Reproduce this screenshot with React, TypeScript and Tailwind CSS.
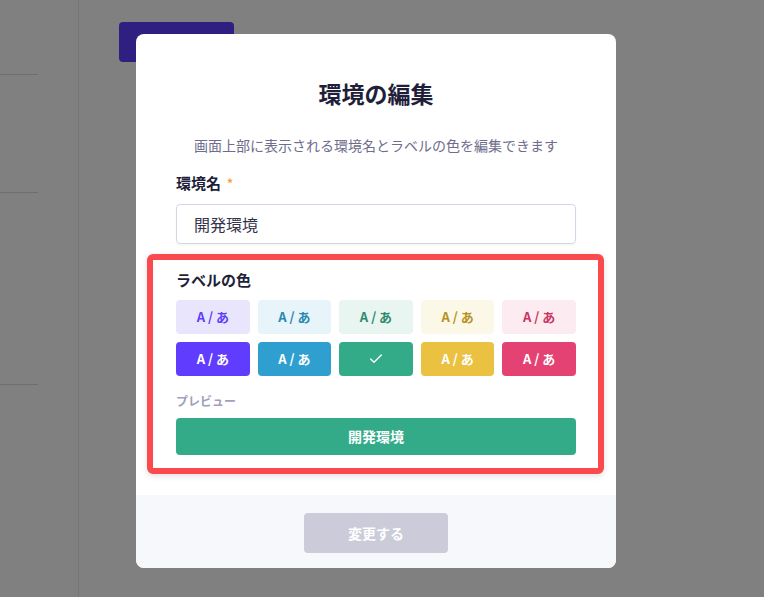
import { Check } from 'lucide-react';

const swatches = [
  { light: 'bg-[#e9e5fd] text-[#5f3dfc]', dark: 'bg-[#603dfe]' },
  { light: 'bg-[#e7f4f9] text-[#2a88b0]', dark: 'bg-[#2f9fd0]' },
  { light: 'bg-[#e8f5f0] text-[#2f8a6c]', dark: 'bg-[#33ab89]', selected: true },
  { light: 'bg-[#fcf8e8] text-[#b59223]', dark: 'bg-[#ebc142]' },
  { light: 'bg-[#fcebf0] text-[#c9355e]', dark: 'bg-[#e44272]' },
];

export default function App() {
  return (
    <div className="relative w-[764px] h-[597px] overflow-hidden bg-[#808080] font-['Noto_Sans_CJK_JP','Noto_Sans',sans-serif]">
      {/* dimmed page behind the dialog */}
      <div className="flex h-full">
        <div className="w-[79px] border-r border-[#767676]">
          <div className="mt-[74px] h-px w-[38px] bg-[#6f6f6f]" />
          <div className="mt-[117px] h-px w-[38px] bg-[#6f6f6f]" />
          <div className="mt-[191px] h-px w-[38px] bg-[#6f6f6f]" />
        </div>
        <div className="pl-[40px] pt-[22px]">
          <div className="w-[115px] h-[40px] rounded-[4px] bg-[#2e1f80]" />
        </div>
      </div>

      {/* dialog */}
      <div className="absolute left-[136px] top-[34px] w-[480px] rounded-[8px] bg-white overflow-hidden">
        <div className="px-10 pt-[43px] pb-[40px]">
          <h2 className="text-center text-[23px] leading-[32px] font-bold text-[#1f1f3a]">環境の編集</h2>
          <p className="mt-[26px] text-center text-[14px] leading-[20px] text-[#6e6d8c]">
            画面上部に表示される環境名とラベルの色を編集できます
          </p>

          <div className="mt-[18px] flex items-center gap-[6px] text-[15px] leading-[20px] font-bold text-[#1f1f3a]">
            環境名
            <span className="text-[12px] text-[#fb9a3c]">*</span>
          </div>
          <div className="mt-[11px] h-[40px] flex items-center rounded-[4px] border border-[#d5d5e3] px-[17px] text-[16px] text-[#33334a] shadow-[0_1px_2px_rgba(0,0,0,0.05)]">
            開発環境
          </div>

          <div className="relative mt-[26px]">
            <div className="absolute -left-[29px] -right-[28px] -top-[16px] -bottom-[19px] rounded-[6px] border-[6px] border-[#fb4a4d] shadow-[0_2px_6px_rgba(0,0,0,0.12)]" />
            <div className="text-[15px] leading-[20px] font-bold text-[#1f1f3a]">ラベルの色</div>
            <div className="mt-[10px] grid grid-cols-5 gap-2">
              {swatches.map((s, i) => (
                <div key={`l${i}`} className={`h-[34px] rounded-[4px] flex items-center justify-center text-[13px] font-bold ${s.light}`}>
                  A / あ
                </div>
              ))}
              {swatches.map((s, i) => (
                <div key={`d${i}`} className={`h-[34px] rounded-[4px] flex items-center justify-center text-[13px] font-bold text-white ${s.dark}`}>
                  {s.selected ? <Check size={16} strokeWidth={2} /> : 'A / あ'}
                </div>
              ))}
            </div>
            <div className="mt-[17px] text-[12px] leading-[16px] font-bold text-[#a19fbb]">プレビュー</div>
            <div className="mt-[9px] h-[37px] rounded-[4px] bg-[#33ab89] flex items-center justify-center text-[14px] font-bold text-white">
              開発環境
            </div>
          </div>
        </div>

        <div className="h-[73px] bg-[#f7f8fc] flex justify-center pt-[18px]">
          <button className="w-[144px] h-[40px] rounded-[4px] bg-[#cccbd9] text-[14px] font-bold text-white">
            変更する
          </button>
        </div>
      </div>
    </div>
  );
}
